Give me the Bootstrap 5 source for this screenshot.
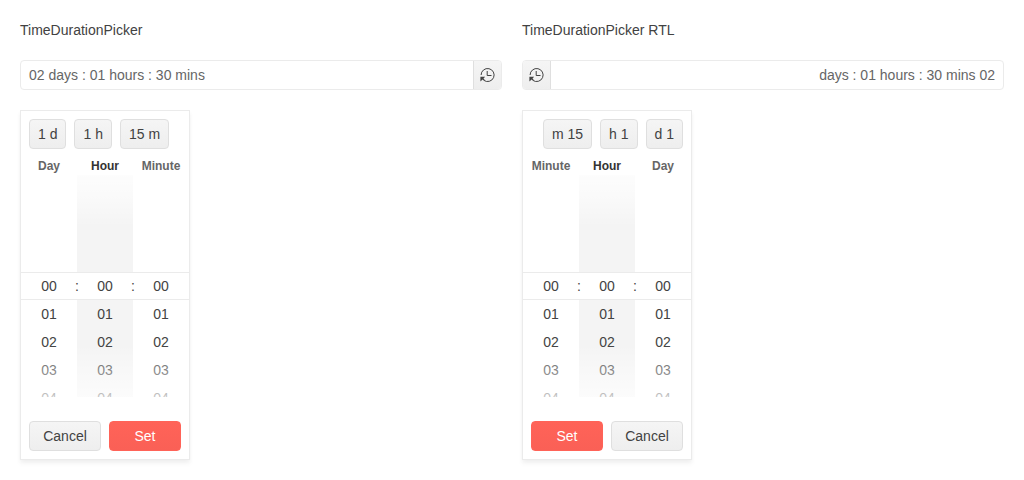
<!DOCTYPE html>
<html lang="en">
<head>
<meta charset="utf-8">
<title>TimeDurationPicker</title>
<link href="https://cdn.jsdelivr.net/npm/bootstrap@5.3.0/dist/css/bootstrap.min.css" rel="stylesheet">
<style>
  body { font: 14px/20px "Liberation Sans", Arial, sans-serif; color: #424242; background: #fff; }
  .demo { padding: 20px; gap: 20px; }
  .demo > section { flex: 1 1 0; gap: 20px; }
  .picker { height: 30px; border: 1px solid #ebebeb; border-radius: 4px; overflow: hidden; }
  .picker-value { padding: 4px 8px; color: #666; }
  .picker-btn { width: 28px; background: linear-gradient(#f5f5f5, #eee); border-inline-start: 1px solid #dfdfdf; }
  .popup { width: 170px; height: 350px; border: 1px solid #ebebeb; box-shadow: 0 2px 4px rgba(0,0,0,.03), 0 4px 5px rgba(0,0,0,.04); }
  .popup .btn { --bs-btn-padding-x: 8px; --bs-btn-padding-y: 4px; --bs-btn-font-size: 14px; --bs-btn-line-height: 20px;
    --bs-btn-border-radius: 4px; --bs-btn-color: #424242; --bs-btn-border-color: #dfdfdf; background: linear-gradient(#f5f5f5, #eee); }
  .popup .btn-set { --bs-btn-color: #fff; --bs-btn-border-color: #ff6358; background: linear-gradient(#ff6358, #fa6056); }
  .quick { padding: 8px 8px 0; gap: 8px; }
  .titles { font-size: 12px; line-height: 18px; font-weight: 700; color: #666; padding-top: 8px; }
  .titles > *, .reel { flex: 0 0 56px; text-align: center; }
  .titles .current { color: #333; }
  .reels { height: 222px; overflow: hidden; }
  .reel { padding-top: 97px; line-height: 28px; }
  .reel.current { background: #f4f4f4; }
  .reels::before, .reels::after { content: ""; position: absolute; left: 0; right: 0; height: 52px; z-index: 2; }
  .reels::before { top: 0; background: linear-gradient(rgba(255,255,255,.8), rgba(255,255,255,.55) 40%, rgba(255,255,255,0)); }
  .reels::after { bottom: 0; background: linear-gradient(rgba(255,255,255,0), rgba(255,255,255,.32) 40%, rgba(255,255,255,.7)); }
  .band { top: 97px; left: 0; right: 0; height: 28px; line-height: 26px; background: #fff; border: solid #ebebeb; border-width: 1px 0; z-index: 1; }
  .band span { flex: 0 0 56px; text-align: center; }
  .band i { font-style: normal; width: 8px; margin: 0 -4px; text-align: center; }
  .actions { padding: 8px; gap: 8px; }
  .actions .btn { flex: 1 1 0; }
</style>
</head>
<body>
<main class="demo d-flex">
  <section class="d-flex flex-column">
    <div>TimeDurationPicker</div>
    <div class="picker d-flex">
      <div class="picker-value flex-grow-1">02 days : 01 hours : 30 mins</div>
      <div class="picker-btn d-flex align-items-center justify-content-center">
        <svg width="16" height="16" viewBox="0 0 16 16" fill="none" stroke="#424242"><path d="M1.1 8A6.5 6.5 0 1 1 3.8 13.3M7.2 4v4.5h4.3"/><path d="M.4 9.8h4.8L3.5 11.5l1.2 1.2-.9.9-1.2-1.2L.4 14.5z" fill="#424242" stroke="none"/></svg>
      </div>
    </div>
    <div class="popup d-flex flex-column">
      <div class="quick d-flex"><button class="btn">1 d</button><button class="btn">1 h</button><button class="btn">15 m</button></div>
      <div class="titles d-flex"><div>Day</div><div class="current">Hour</div><div>Minute</div></div>
      <div class="reels d-flex position-relative">
        <div class="reel"><div>&nbsp;</div><div>01</div><div>02</div><div>03</div><div>04</div></div>
        <div class="reel current"><div>&nbsp;</div><div>01</div><div>02</div><div>03</div><div>04</div></div>
        <div class="reel"><div>&nbsp;</div><div>01</div><div>02</div><div>03</div><div>04</div></div>
        <div class="band d-flex position-absolute"><span>00</span><i>:</i><span>00</span><i>:</i><span>00</span></div>
      </div>
      <div class="actions d-flex mt-auto"><button class="btn">Cancel</button><button class="btn btn-set">Set</button></div>
    </div>
  </section>
  <section class="d-flex flex-column">
    <div>TimeDurationPicker RTL</div>
    <div class="picker d-flex" dir="rtl">
      <div class="picker-value flex-grow-1"><bdo dir="ltr">days : 01 hours : 30 mins 02</bdo></div>
      <div class="picker-btn d-flex align-items-center justify-content-center">
        <svg width="16" height="16" viewBox="0 0 16 16" fill="none" stroke="#424242"><path d="M1.1 8A6.5 6.5 0 1 1 3.8 13.3M7.2 4v4.5h4.3"/><path d="M.4 9.8h4.8L3.5 11.5l1.2 1.2-.9.9-1.2-1.2L.4 14.5z" fill="#424242" stroke="none"/></svg>
      </div>
    </div>
    <div class="popup d-flex flex-column" dir="rtl">
      <div class="quick d-flex"><button class="btn" dir="ltr">d 1</button><button class="btn" dir="ltr">h 1</button><button class="btn" dir="ltr">m 15</button></div>
      <div class="titles d-flex"><div>Day</div><div class="current">Hour</div><div>Minute</div></div>
      <div class="reels d-flex position-relative">
        <div class="reel"><div>&nbsp;</div><div>01</div><div>02</div><div>03</div><div>04</div></div>
        <div class="reel current"><div>&nbsp;</div><div>01</div><div>02</div><div>03</div><div>04</div></div>
        <div class="reel"><div>&nbsp;</div><div>01</div><div>02</div><div>03</div><div>04</div></div>
        <div class="band d-flex position-absolute"><span>00</span><i>:</i><span>00</span><i>:</i><span>00</span></div>
      </div>
      <div class="actions d-flex mt-auto"><button class="btn">Cancel</button><button class="btn btn-set">Set</button></div>
    </div>
  </section>
</main>
<script src="https://cdn.jsdelivr.net/npm/bootstrap@5.3.0/dist/js/bootstrap.bundle.min.js"></script>
</body>
</html>
